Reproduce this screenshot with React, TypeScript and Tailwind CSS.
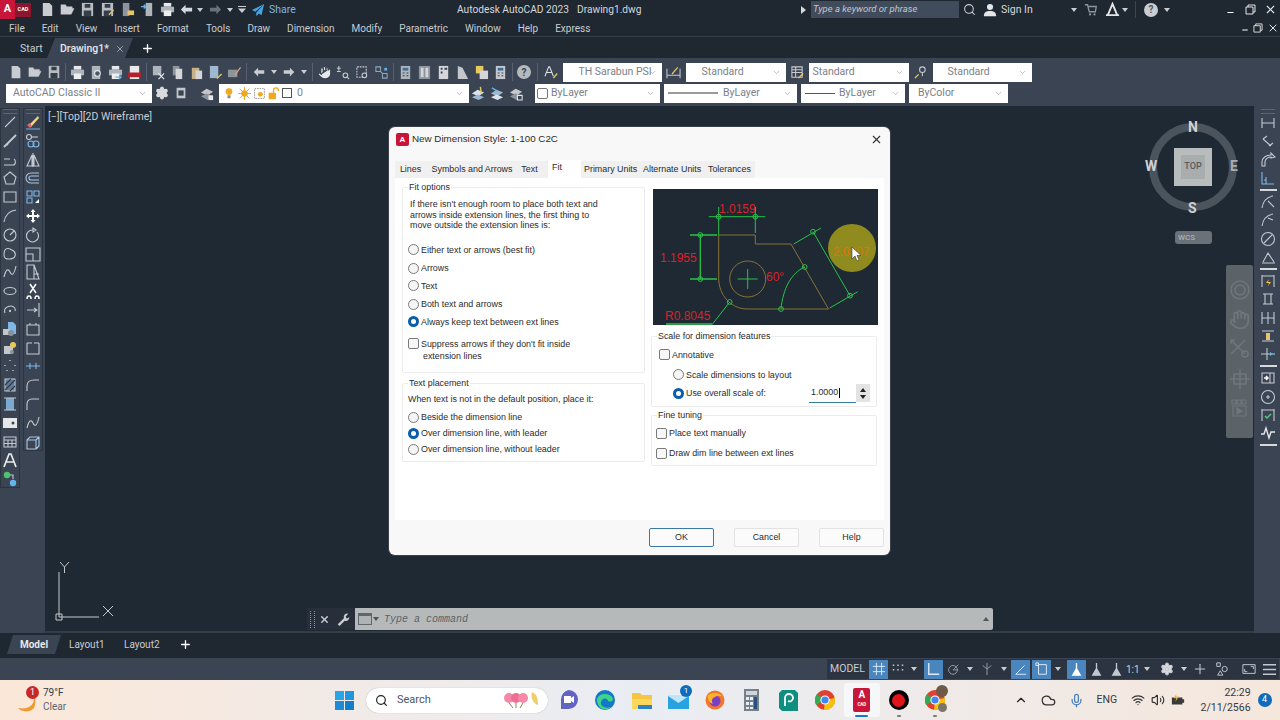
import type { ReactNode } from 'react';
import { ChevronDown, Search, X, Plus, Minus, Settings, ChevronUp, Mic, Cloud, Wifi, Volume2, Hand } from 'lucide-react';

const menus = ['File', 'Edit', 'View', 'Insert', 'Format', 'Tools', 'Draw', 'Dimension', 'Modify', 'Parametric', 'Window', 'Help', 'Express'];

function G({ children, s = 16, className = '', w = 1.1 }: { children: ReactNode; s?: number; className?: string; w?: number }) {
    return (
        <svg width={s} height={s} viewBox="0 0 16 16" fill="none" stroke="currentColor" strokeWidth={w} className={className}>
            {children}
        </svg>
    );
}

const Doc = () => <path d="M3 1h7l3 3v11H3z" fill="#c9ccd1" stroke="none" />;
const Folder = () => <path d="M1 13V3h5l1 2h6v2H4l-3 6h11l3-6H4" fill="#c9ccd1" stroke="#c9ccd1" strokeWidth="0.5" />;
const Disk = () => (
    <>
        <path d="M2 1h12v14H2z" fill="#b9bdc3" stroke="none" />
        <path d="M5 2h6v4H5zM4 9h8v6H4z" fill="#343d4a" stroke="none" />
    </>
);
const Printer = () => (
    <>
        <path d="M4 1h8v4H4z" fill="#e6e8ea" stroke="none" />
        <path d="M1 5h14v6H1z" fill="#aeb4bb" stroke="none" />
        <path d="M4 9h8v6H4z" fill="#eceeef" stroke="none" />
    </>
);
const Undo = () => <path d="M7 3 2 8l5 5V10h7V6H7z" fill="currentColor" stroke="none" />;
const Redo = () => <path d="M9 3l5 5-5 5V10H2V6h7z" fill="currentColor" stroke="none" />;
const Sheet = ({ c = '#c4c8cd' }: { c?: string }) => (
    <>
        <path d="M3 1h10v14H3z" fill={c} stroke="none" />
        <path d="M5 3h6v3H5z" fill="#3f6f9c" stroke="none" />
        <path d="M5 8h2v1H5zM9 8h2v1H9zM5 11h2v1H5zM9 11h2v1H9z" fill="#3a4452" stroke="none" />
    </>
);

function Cell({ children, w = 'w-[19px]' }: { children?: ReactNode; w?: string }) {
    return <div className={`flex shrink-0 items-center justify-center text-[#c9ccd1] ${w}`}>{children}</div>;
}

function Sep({ w = 'w-[5px]' }: { w?: string }) {
    return (
        <div className={`flex shrink-0 justify-center ${w}`}>
            <div className="h-[18px] w-px bg-[#566070]" />
        </div>
    );
}

function Caret() {
    return (
        <svg width="6" height="4" viewBox="0 0 6 4">
            <path d="M0 0h6L3 4z" fill="#c9ccd1" />
        </svg>
    );
}

function Combo({ w, children }: { w: string; children: ReactNode }) {
    return (
        <div className={`flex h-[19px] shrink-0 items-center justify-between bg-white pr-[5px] text-[10.5px] text-[#7c8187] ${w}`}>
            <div className="flex min-w-0 items-center whitespace-nowrap">{children}</div>
            <ChevronDown size={9} className="shrink-0 text-[#a5a8ac]" />
        </div>
    );
}

const leftA: ReactNode[] = [
    <path d="M3 13 13 3" />,
    <path d="M2 14 14 2M5 11l1 1M10 6l1-1" strokeWidth="1.8" />,
    <path d="M2 13h9c3 0 3-5 1-6M2 7h6" />,
    <path d="M8 2l6 5-2 7H4L2 7z" />,
    <path d="M2 3h12v10H2z" />,
    <path d="M2 14C3 8 7 3 14 2" />,
    <>
        <circle cx="8" cy="8" r="6" />
        <path d="M8 8l4-4" />
    </>,
    <path d="M3 4c2-3 5-1 7 0s4 3 3 6-4 3-6 3-5 0-5-4 0-4 1-5z" />,
    <path d="M2 13c2-8 4-9 6-5s4 3 6-6" />,
    <ellipse cx="8" cy="8" rx="6" ry="3.5" />,
    <>
        <path d="M3 11C1 6 6 4 9 4s5 3 4 5" />
        <circle cx="8" cy="9" r="0.6" />
    </>,
    <>
        <path d="M6 1h5l3 3v9H6z" fill="#7db7e8" stroke="none" />
        <path d="M1 8h7v6H1z" fill="#c3c6ca" stroke="none" />
        <circle cx="9" cy="12" r="3" fill="#8a9097" stroke="none" />
    </>,
    <>
        <path d="M2 6h9v8H2z" fill="#c3c6ca" stroke="none" />
        <circle cx="11" cy="5" r="3" fill="#e9c85a" stroke="none" />
        <circle cx="10" cy="12" r="2" fill="#8a9097" stroke="none" />
    </>,
    <path d="M8 2v1M3 7v1M13 7v1M5 12v1M11 12v1" strokeWidth="1.4" strokeDasharray="1 1" />,
    <>
        <path d="M3 2h10v12H3z" fill="#5f7a96" />
        <path d="M3 8l6-6M3 13 13 3M8 14l5-5" stroke="#2f3845" />
    </>,
    <>
        <path d="M4 2h8v12H4z" fill="#79a9cf" stroke="none" />
        <path d="M2 2h12M2 14h12" />
    </>,
    <path d="M1 3h14v10H1z M9.5 8a1.5 1.5 0 1 0 3 0 1.5 1.5 0 1 0-3 0" fill="#e5e7e9" fillRule="evenodd" stroke="none" />,
    <path d="M2 3h12v10H2zM2 6h12M2 9.5h12M6 6v7M10 6v7" />,
    <path d="M2 15 7 2h2l5 13M4.5 10h7" strokeWidth="1.7" stroke="#e8eaec" />,
    <>
        <circle cx="5" cy="4" r="3.2" fill="#4cc46a" stroke="none" />
        <circle cx="11" cy="12" r="3.2" fill="#62b5ea" stroke="none" />
        <path d="M8 4h3v4" />
    </>,
];

const leftB: ReactNode[] = [
    <>
        <path d="M4 11 13 2l1 2-8 9z" fill="#f2d488" stroke="none" />
        <path d="M2 11l3-2 2 3-2 2z" fill="#e66a6a" stroke="none" />
        <path d="M1 15h14" stroke="#6ea7d8" />
    </>,
    <>
        <circle cx="4" cy="4" r="2.5" />
        <path d="M6 4h7" />
        <circle cx="6" cy="11" r="3" stroke="#7db7e8" />
        <circle cx="11" cy="11" r="3" stroke="#7db7e8" />
    </>,
    <path d="M8 1v14M7 3 2 14h5zM9 3l5 11H9z" />,
    <path d="M14 3H6a5 5 0 0 0 0 10h8M14 6H6a2 2 0 0 0 0 4h8" stroke="#a9c6e2" />,
    <>
        <path d="M2 2h5v5H2zM9 2h5v5H9zM2 9h5v5H2z" stroke="#7db7e8" />
        <path d="M10 14l4-4v4z" fill="#fff" stroke="none" />
    </>,
    <path d="M8 1 5.5 4H7v3H4V5.5L1 8l3 2.5V9h3v3H5.5L8 15l2.5-3H9V9h3v1.5L15 8l-3-2.5V7H9V4h1.5z" fill="#fff" stroke="none" />,
    <path d="M12 5a6 6 0 1 1-4-2M8 1v4l3-2z" />,
    <>
        <path d="M1 2h14v13H1z" />
        <path d="M1 8h7v7" />
    </>,
    <path d="M2 1h7v14H2zM9 1l5 14H9M9 10h4l-1-1m1 1-1 1" />,
    <path d="M5 1l6 9M11 1l-6 9M4 13a2 2 0 1 0 .1 0M12 13a2 2 0 1 0 .1 0" stroke="#fff" strokeWidth="1.5" />,
    <path d="M14 1v14M2 8h9m-2-2 3 2-3 2" />,
    <path d="M2 4h12v10H2zM5 4V2M11 4V2" />,
    <path d="M2 3v11h12V3M7 3H2M14 3H9" />,
    <path d="M1 8h14M5 5v6M11 5v6" stroke="#7db7e8" />,
    <path d="M2 14V9c0-4 3-6 7-6h5" />,
    <path d="M2 14V8c0-3 2-5 5-5h7" />,
    <path d="M2 13c2-8 4-9 6-5s4 3 6-6" />,
    <path d="M2 6h9v9H2zM2 6l3-3h9v9l-3 3M11 6l3-3" stroke="#a9c6e2" />,
];

const right: (ReactNode | 'sep')[] = [
    <path d="M2 3v10M14 3v10M2 8h12" />,
    <path d="M3 6l4-3M9 13l4-3M3 6l8 7" />,
    <path d="M2 14V10C2 6 6 3 11 3V1l4 4-4 1V5c-3 0-6 2-6 5v4z" />,
    <path d="M2 2v12h12M6 14V7M4 10h2" stroke="#7db7e8" />,
    'sep',
    <path d="M2 14C3 7 7 3 13 2M8 7l6 6" />,
    <path d="M2 14C3 7 7 3 13 2M8 6l5 2" />,
    <>
        <circle cx="8" cy="8" r="6.5" />
        <path d="M4 12l8-8" />
    </>,
    <path d="M2 14h13M3 13 8 4l6 9" />,
    'sep',
    <>
        <path d="M2 2v12M14 2v12M2 3h12" />
        <path d="M9 6l-3 4h3l-1 3 3-4H8z" fill="#f2c94c" stroke="none" />
    </>,
    <path d="M3 3h10M3 13h10M5 3v10M11 3v10" />,
    <path d="M2 2v12M8 2v12M14 2v12M2 8h12" />,
    <>
        <path d="M2 3h12M2 13h12" />
        <path d="M6 5h4v7H6z" fill="#e6c46c" stroke="none" />
    </>,
    <>
        <path d="M1 8h14M7 2v12" />
        <path d="M10 6l3 2-3 2z" fill="#62b5ea" stroke="none" />
    </>,
    'sep',
    <>
        <path d="M2 3h12v10H2zM10 3v10" />
        <path d="M4 8h3M6 6l2 2-2 2" stroke="#fff" strokeWidth="1.5" />
    </>,
    <>
        <circle cx="8" cy="8" r="6.5" />
        <path d="M6 8h4M8 6v4" />
    </>,
    <>
        <path d="M2 2v12M14 2v12M2 3h12" />
        <path d="M5 9l2 2 4-4" stroke="#55c96e" strokeWidth="1.5" />
    </>,
    <path d="M1 9h3l2-6 3 10 2-6h4" stroke="#e6e8ea" strokeWidth="1.4" />,
    'sep',
];

function Grip() {
    return <div className="mx-auto h-[5px] w-[14px] border-y border-[#677180] opacity-70" />;
}

function TitleBar() {
    return (
        <div className="flex h-[19px] items-center text-[#d5d8dc]">
            <div className="flex h-[19px] w-[15px] items-center justify-center bg-[#c8163a] text-[11px] font-bold text-white">A</div>
            <div className="flex h-[14px] w-[16px] items-center justify-center bg-[#8a1630] text-[5.5px] font-bold text-white">CAD</div>
            <div className="ml-[6px] flex items-center">
                <Cell w="w-[20px]"><G s={15}><Doc /></G></Cell>
                <Cell w="w-[20px]"><G s={15}><Folder /></G></Cell>
                <Cell w="w-[20px]"><G s={15}><Disk /></G></Cell>
                <Cell w="w-[20px]">
                    <G s={15}>
                        <Disk />
                        <path d="M9 13l5-5 1 1-5 5z" fill="#e9c85a" stroke="none" />
                    </G>
                </Cell>
                <Cell w="w-[20px]">
                    <G s={15}>
                        <path d="M3 1h7v14H3z" fill="#8e949b" stroke="none" />
                        <path d="M8 9h7v5H8z" fill="#e6c46c" stroke="none" />
                    </G>
                </Cell>
                <Cell w="w-[20px]">
                    <G s={15}>
                        <path d="M6 1h7v14H6z" fill="#aeb4bb" stroke="none" />
                        <path d="M1 5h5m-2-2 2 2-2 2" stroke="#62b5ea" strokeWidth="1.4" />
                    </G>
                </Cell>
                <Cell w="w-[20px]"><G s={15}><Printer /></G></Cell>
                <Cell w="w-[18px]"><G s={15} className="text-[#d5d8dc]"><Undo /></G></Cell>
                <Cell w="w-[10px]"><Caret /></Cell>
                <Cell w="w-[20px]"><G s={15} className="text-[#69717d]"><Redo /></G></Cell>
                <Cell w="w-[10px]"><Caret /></Cell>
                <Cell w="w-[14px]">
                    <svg width="8" height="7" viewBox="0 0 8 7">
                        <path d="M0 0h8v1H0zM0 2.5h8L4 7z" fill="#c9ccd1" />
                    </svg>
                </Cell>
                <svg width="14" height="14" viewBox="0 0 16 16" className="ml-[2px]">
                    <path d="M15 1 1 8l4 2zM15 1 6 11v4l3-3 3 2z" fill="#4aa3df" />
                </svg>
                <span className="ml-[4px] w-[25px] whitespace-nowrap text-[10.5px] text-[#7fb6e0]">Share</span>
            </div>
            <span className="ml-[163px] w-[109px] whitespace-nowrap text-[10.2px]">Autodesk AutoCAD 2023</span>
            <span className="ml-[11px] whitespace-nowrap text-[10.2px]">Drawing1.dwg</span>
            <div className="ml-auto flex shrink-0 items-center pr-[3px]">
                <svg width="5" height="8" viewBox="0 0 5 8">
                    <path d="M0 0l5 4-5 4z" fill="#d5d8dc" />
                </svg>
                <div className="ml-[5px] flex h-[17px] w-[148px] items-center bg-[#404b5b] pl-[2px] text-[9.5px] italic text-[#c2c7ce]">Type a keyword or phrase</div>
                <Search size={13} className="ml-[3.5px] text-[#c9ccd1]" />
                <svg width="14" height="14" viewBox="0 0 16 16" className="ml-[7.5px]">
                    <circle cx="8" cy="4.5" r="3.5" fill="#e4e6e8" />
                    <path d="M1 15c0-5 3-6 7-6s7 1 7 6z" fill="#e4e6e8" />
                </svg>
                <span className="ml-[4px] w-[31px] whitespace-nowrap text-[10.5px]">Sign In</span>
                <div className="ml-[39px]"><Caret /></div>
                <svg width="14" height="14" viewBox="0 0 16 16" className="ml-[7px]">
                    <path d="M1 2h3l2 8h7l1-6H5" fill="none" stroke="#8e949b" strokeWidth="1.5" />
                    <circle cx="7" cy="13" r="1.3" fill="#8e949b" />
                    <circle cx="12" cy="13" r="1.3" fill="#8e949b" />
                </svg>
                <svg width="15" height="15" viewBox="0 0 16 16" className="ml-[6.5px]">
                    <path d="M8 2 3 14h10zM1 14h14" fill="none" stroke="#e4e6e8" strokeWidth="2" />
                </svg>
                <div className="ml-[2.5px]"><Caret /></div>
                <div className="ml-[7px] h-[17px] w-px bg-[#3c4553]" />
                <div className="ml-[8px] flex h-[14px] w-[14px] items-center justify-center rounded-full bg-[#c9ccd1] text-[10px] font-bold text-[#4c5560]">?</div>
                <div className="ml-[6px]"><Caret /></div>
                <Minus size={9} className="ml-[56px] mt-[6px] text-white" strokeWidth={3} />
                <svg width="11" height="11" viewBox="0 0 11 11" className="ml-[10px]">
                    <path d="M3 3V1h7v7H8M1 3h7v7H1z" fill="none" stroke="#e4e6e8" />
                </svg>
                <X size={13} className="ml-[8px] text-[#e4e6e8]" />
            </div>
        </div>
    );
}

function MenuBar() {
    return (
        <div className="flex h-[18px] items-center justify-between border-b border-[#343c48] pl-[9px] text-[#c9cdd2]">
            <div className="flex gap-[17px] pt-[1px] text-[10px]">
                {menus.map((m) => (
                    <span key={m}>{m}</span>
                ))}
            </div>
            <div className="flex items-center gap-[4px] pr-[1px]">
                <Minus size={8} strokeWidth={3} className="mt-[5px] text-white" />
                <svg width="10" height="10" viewBox="0 0 11 11">
                    <path d="M3 3V1h7v7H8M1 3h7v7H1z" fill="none" stroke="#e4e6e8" />
                </svg>
                <X size={12} className="text-[#e4e6e8]" />
            </div>
        </div>
    );
}

function DocTabs() {
    return (
        <div className="flex h-[21px] items-end pl-[9px] text-[10.5px] text-[#c9cdd2]">
            <span className="mb-[1px] w-[38px] pl-[11px] leading-[16px]">Start</span>
            <div className="flex h-[20px] w-[86px] items-center bg-[#3a4452] pl-[13px] pt-[1px] font-medium text-[#e6e8ea] [clip-path:polygon(8px_0,100%_0,calc(100%-8px)_100%,0_100%)]">
                Drawing1*
                <X size={10} className="ml-[6px] text-[#aeb3b9]" />
            </div>
            <Plus size={13} strokeWidth={2.5} className="mb-[3px] ml-[8px] text-white" />
        </div>
    );
}

function ToolRow1() {
    return (
        <div className="flex h-[20px] items-center pl-[6px] text-[#c9ccd1]">
            <Cell><G s={14}><Doc /></G></Cell>
            <Cell><G s={14}><Folder /></G></Cell>
            <Cell><G s={14}><Disk /></G></Cell>
            <Sep />
            <Cell><G s={15}><Printer /></G></Cell>
            <Cell>
                <G s={15}>
                    <path d="M3 1h9v14H3z" fill="#aeb4bb" stroke="none" />
                    <circle cx="9" cy="9" r="3" fill="#4d5665" stroke="#e6e8ea" />
                </G>
            </Cell>
            <Cell>
                <G s={15}>
                    <Printer />
                    <path d="M8 13h6m-2-2 2 2-2 2" stroke="#62b5ea" strokeWidth="1.3" />
                </G>
            </Cell>
            <Cell>
                <G s={15}>
                    <path d="M3 1h10v14H3z" fill="#e9e9ea" stroke="none" />
                    <path d="M1 8h14v5H1z" fill="#b21f2d" stroke="none" />
                </G>
            </Cell>
            <Sep />
            <Cell>
                <G s={15}>
                    <path d="M2 1h9v10H2z" fill="#aeb4bb" stroke="none" />
                    <path d="M8 9l6 6M14 9l-6 6" stroke="#e6e8ea" strokeWidth="1.3" />
                </G>
            </Cell>
            <Cell>
                <G s={15}>
                    <path d="M3 1h7v10H3z" fill="#8e949b" stroke="none" />
                    <path d="M6 4h7v11H6z" fill="#d4d6d9" stroke="none" />
                </G>
            </Cell>
            <Cell>
                <G s={15}>
                    <path d="M3 3h8v12H3z" fill="#c8b183" stroke="none" />
                    <path d="M7 6h7v9H7z" fill="#d4d6d9" stroke="none" />
                </G>
            </Cell>
            <Cell>
                <G s={15}>
                    <path d="M2 1h9v13H2z" fill="#9fb7cf" stroke="none" />
                    <path d="M9 14l5-5 1 1-5 5z" fill="#e9c85a" stroke="none" />
                </G>
            </Cell>
            <Cell>
                <G s={15}>
                    <path d="M1 5h10v8H1z" fill="#8e949b" stroke="none" />
                    <path d="M8 10l6-8 1 1-6 8z" fill="#e3a774" stroke="none" />
                </G>
            </Cell>
            <Sep w="w-[5.5px]" />
            <Cell><G s={14}><Undo /></G></Cell>
            <Cell w="w-[11px]"><Caret /></Cell>
            <Cell><G s={14}><Redo /></G></Cell>
            <Cell w="w-[11px]"><Caret /></Cell>
            <Sep />
            <Cell><Hand size={15} fill="#e6e8ea" className="text-[#3a4452]" /></Cell>
            <Cell>
                <G s={15}>
                    <path d="M3 1v5M1 3.5h4M1 7h4" />
                    <circle cx="10" cy="11" r="2.5" />
                    <path d="M12 13l2 2" />
                </G>
            </Cell>
            <Cell>
                <G s={15}>
                    <path d="M2 2h10v11H2z" strokeDasharray="2 1" />
                    <circle cx="10" cy="11" r="2.5" fill="#3a4452" />
                </G>
            </Cell>
            <Cell>
                <G s={15}>
                    <path d="M2 2h5v5H2zM9 9h5v5H9zM7 7l2 2" stroke="#8fa8c2" />
                    <path d="M11 3h3v3h-3z" fill="#62b5ea" stroke="none" />
                </G>
            </Cell>
            <Sep />
            <Cell>
                <G s={15}><Sheet c="#aeb4bb" /></G>
            </Cell>
            <Cell>
                <G s={15}>
                    <path d="M2 1h12v14H2z" fill="#8e949b" stroke="none" />
                    <path d="M4 3h3v10H4zM9 3h3v10H9z" fill="#d4d6d9" stroke="none" />
                </G>
            </Cell>
            <Cell>
                <G s={15}>
                    <path d="M3 1h10v14H3z" fill="#d4d6d9" stroke="none" />
                    <path d="M5 3h2v2H5zM5 7h2v2H5zM9 3h3v2H9z" fill="#3a4452" stroke="none" />
                </G>
            </Cell>
            <Cell>
                <G s={15}>
                    <path d="M3 1l5 2 6 12H3z" fill="#c4c8cd" stroke="none" />
                </G>
            </Cell>
            <Cell>
                <G s={15}>
                    <path d="M2 1h8v8H2z" fill="#e9c85a" stroke="none" />
                    <path d="M6 6h9v9H6z" fill="#d4d6d9" stroke="none" />
                </G>
            </Cell>
            <Cell><G s={15}><Sheet /></G></Cell>
            <Sep />
            <Cell>
                <div className="flex h-[14px] w-[14px] items-center justify-center rounded-full bg-[#b5b9be] text-[10px] font-bold text-[#3a4452]">?</div>
            </Cell>
            <Sep w="w-[8px]" />
            <Cell>
                <G s={15}>
                    <path d="M1 12 5 2h1l4 10M3 8h5" stroke="#dfe1e4" />
                    <path d="M10 14l4-5" stroke="#e9c85a" strokeWidth="1.5" />
                </G>
            </Cell>
            <div className="w-[2px]" />
            <Combo w="w-[99px]"><span className="pl-[16px]">TH Sarabun PSI</span></Combo>
            <Cell w="w-[24px]">
                <G s={15}>
                    <path d="M1 4v10M15 4v10M1 11h14" />
                    <path d="M6 9l6-7 1 1-6 7z" fill="#e9c85a" stroke="none" />
                </G>
            </Cell>
            <Combo w="w-[100px]"><span className="pl-[16px]">Standard</span></Combo>
            <Cell w="w-[23px]">
                <G s={15}>
                    <path d="M2 2h11v11H2zM2 5h11M2 8h11M6 2v11" />
                    <path d="M9 14l5-5" stroke="#e9c85a" strokeWidth="1.5" />
                </G>
            </Cell>
            <Combo w="w-[100px]"><span className="pl-[4px]">Standard</span></Combo>
            <Cell w="w-[24px]">
                <G s={15}>
                    <path d="M2 14l4-4" stroke="#e9c85a" strokeWidth="1.5" />
                    <circle cx="10" cy="5" r="3" />
                    <path d="M10 8v4" />
                </G>
            </Cell>
            <Combo w="w-[99px]"><span className="pl-[15px]">Standard</span></Combo>
        </div>
    );
}

function ToolRow2() {
    return (
        <div className="mt-[1px] flex h-[20px] items-center pl-[6px]">
            <Combo w="w-[146px]"><span className="pl-[7px]">AutoCAD Classic II</span></Combo>
            <Cell><Settings size={14} fill="#d9dbde" className="text-[#d9dbde]" /></Cell>
            <Cell>
                <G s={14}>
                    <path d="M3 2h10v12H3z" fill="#c4c8cd" stroke="none" />
                    <path d="M5 5h6v6H5z" fill="#39424f" stroke="none" />
                </G>
            </Cell>
            <div className="w-[8px] shrink-0" />
            <Cell>
                <G s={15}>
                    <path d="M1 7l6-4 7 3-6 4z" fill="#c4c8cd" stroke="none" />
                    <path d="M1 11l6-3 7 3-6 4z" fill="#8e949b" stroke="none" />
                    <path d="M9 10h5v5H9z" fill="#e6e8ea" stroke="none" />
                </G>
            </Cell>
            <div className="w-[2px] shrink-0" />
            <div className="flex h-[19px] w-[250px] shrink-0 items-center justify-between bg-white pr-[5px]">
                <div className="flex items-center gap-[1px] pl-[4px] text-[10.5px] text-[#7c8187]">
                    <G s={12}>
                        <circle cx="8" cy="6" r="4.5" fill="#f0a81f" stroke="none" />
                        <path d="M6 11h4v4H6z" fill="#8a8a80" stroke="none" />
                    </G>
                    <div className="w-[1px]" />
                    <svg width="13" height="13" viewBox="0 0 16 16">
                        <circle cx="8" cy="8" r="4" fill="#f0a81f" />
                        <path d="M8 0v16M0 8h16M2 2l12 12M14 2 2 14" stroke="#f0a81f" strokeWidth="1.2" />
                    </svg>
                    <svg width="13" height="13" viewBox="0 0 16 16" className="ml-[1px]">
                        <path d="M2 2h12v12H2z" fill="none" stroke="#888" strokeDasharray="2 1" />
                        <circle cx="9" cy="9" r="3" fill="#f0a81f" />
                    </svg>
                    <svg width="13" height="13" viewBox="0 0 16 16">
                        <path d="M2 7h9v8H2z" fill="#f0a81f" />
                        <path d="M8 7V4a3 3 0 0 1 6 0v1" fill="none" stroke="#f0a81f" strokeWidth="1.6" />
                    </svg>
                    <div className="ml-[1px] h-[10px] w-[10px] border border-[#555]" />
                    <span className="ml-[4px]">0</span>
                </div>
                <ChevronDown size={9} className="text-[#a5a8ac]" />
            </div>
            <Cell>
                <G s={15}>
                    <path d="M1 8l6-4 7 3-6 4z" fill="#dbe2ea" stroke="none" />
                    <path d="M1 12l6-3 7 3-6 3z" fill="#9fb7cf" stroke="none" />
                    <path d="M10 1l1 7" stroke="#e9c85a" strokeWidth="1.5" />
                </G>
            </Cell>
            <Cell>
                <G s={15}>
                    <path d="M1 8l6-4 7 3-6 4z" fill="#9fb7cf" stroke="none" />
                    <path d="M1 12l6-3 7 3-6 3z" fill="#dbe2ea" stroke="none" />
                    <path d="M2 2l5 3" stroke="#62b5ea" strokeWidth="1.5" />
                </G>
            </Cell>
            <Cell>
                <G s={15}>
                    <path d="M1 7l6-4 7 3-6 4z" fill="#c4c8cd" stroke="none" />
                    <path d="M1 11l6-3 7 3-6 4z" fill="#8e949b" stroke="none" />
                    <path d="M9 10h5v5H9z" fill="#39424f" stroke="#e6e8ea" />
                </G>
            </Cell>
            <div className="w-[9px] shrink-0" />
            <Combo w="w-[125px]">
                <div className="ml-[2px] h-[11px] w-[11px] rounded-[2px] border border-[#777]" />
                <span className="ml-[3px]">ByLayer</span>
            </Combo>
            <div className="w-[4px] shrink-0" />
            <Combo w="w-[133px]">
                <div className="ml-[4px] h-[2px] w-[50px] bg-[#9a9a9a]" />
                <span className="ml-[5px]">ByLayer</span>
            </Combo>
            <div className="w-[4px] shrink-0" />
            <Combo w="w-[104px]">
                <div className="ml-[4px] h-px w-[30px] bg-[#555]" />
                <span className="ml-[4px]">ByLayer</span>
            </Combo>
            <div className="w-[4px] shrink-0" />
            <Combo w="w-[99px]"><span className="pl-[9px]">ByColor</span></Combo>
        </div>
    );
}

function LeftRail() {
    const col = (items: ReactNode[], key: string) => (
        <div key={key} className="flex w-[20px] flex-col items-center border border-[#2c3440] text-[#c3c9d1]">
            <Grip />
            <div className="flex flex-col gap-[2.8px]">
                {items.map((it, i) => (
                    <G key={i} s={16}>{it}</G>
                ))}
            </div>
        </div>
    );
    return (
        <div className="flex w-[45px] shrink-0 items-start gap-[3px] bg-[#3a4452] pt-[2px]">
            {col(leftA, 'a')}
            {col(leftB, 'b')}
        </div>
    );
}

function RightRail() {
    return (
        <div className="flex w-[26px] shrink-0 flex-col items-center bg-[#3a4452] pl-[2px] pt-[3px] text-[#c3c9d1]">
            <Grip />
            <div className="mt-[1px] flex flex-col items-center gap-[2.3px]">
                {right.map((it, i) =>
                    it === 'sep' ? (
                        <div key={i} className="my-[1px] h-[1.5px] w-[17px] bg-[#d5d8dc]" />
                    ) : (
                        <G key={i} s={16}>{it}</G>
                    ),
                )}
            </div>
        </div>
    );
}

function Compass() {
    return (
        <div className="absolute left-[1101px] top-[14px] flex h-[94px] w-[94px] items-center justify-center">
            <div className="absolute inset-[3px] rounded-full border-[8px] border-[#4b535c]" />
            <div className="relative flex h-[38px] w-[38px] items-center justify-center bg-[#b9bcbc]">
                <div className="flex h-[24px] w-[24px] items-center justify-center bg-[#a9adae] text-[9px] font-medium text-[#555b60]">TOP</div>
            </div>
            <span className="absolute left-[42px] top-[-3px] text-[14px] font-bold text-[#cfd2d4]">N</span>
            <span className="absolute left-[42px] top-[78px] text-[14px] font-bold text-[#cfd2d4]">S</span>
            <span className="absolute left-[84px] top-[36px] text-[14px] font-bold text-[#a9adb0]">E</span>
            <span className="absolute left-[-1px] top-[36px] text-[14px] font-bold text-[#cfd2d4]">W</span>
        </div>
    );
}

function WcsPill() {
    return <div className="absolute left-[1130px] top-[125px] flex h-[13px] w-[37px] items-center rounded-[3px] bg-[#6a7179] pl-[3px] text-[8px] font-medium text-[#a9aeb3]">WCS</div>;
}

function NavBar() {
    return (
        <div className="absolute left-[1181px] top-[159px] flex h-[173px] w-[27px] flex-col items-center gap-[8px] rounded-[2px] bg-[#5b6268] pt-[14px] text-[#70777c]">
            <svg width="22" height="22" viewBox="0 0 22 22" fill="none" stroke="currentColor" strokeWidth="1.5">
                <circle cx="11" cy="11" r="9" />
                <circle cx="11" cy="11" r="5" />
            </svg>
            <Hand size={21} />
            <svg width="22" height="22" viewBox="0 0 22 22" fill="none" stroke="currentColor" strokeWidth="1.5">
                <path d="M2 2l14 14M2 16 16 2M2 2h4M2 2v4" />
                <circle cx="16" cy="16" r="3" />
            </svg>
            <svg width="22" height="22" viewBox="0 0 22 22" fill="none" stroke="currentColor" strokeWidth="1.5">
                <path d="M11 1v20M1 11h20M5 6h12v10H5z" />
            </svg>
            <svg width="20" height="22" viewBox="0 0 20 22" fill="none" stroke="currentColor" strokeWidth="1.2">
                <path d="M2 2h4v4H2zM7 2h4v4H7zM12 2h4v4h-4zM3 8h13v10H3z" />
                <path d="M7 10l5 3-5 3z" fill="currentColor" />
            </svg>
        </div>
    );
}

function Ucs() {
    return (
        <svg width="70" height="70" viewBox="0 0 70 70" className="absolute bottom-[3px] left-[8px]" fill="none" stroke="#c4c8cc" strokeWidth="1">
            <path d="M6 59V14M6 59h40M3 56h6v6H3z" />
            <path d="M7 4l4.5 5L16 4M11.5 9v6" />
            <path d="M50 48l10 10M60 48 50 58" />
        </svg>
    );
}

function CommandLine() {
    return (
        <div className="absolute bottom-[1px] left-[262px] flex h-[22px] w-[686px] overflow-hidden rounded-r-[2px]">
            <div className="flex w-[48px] items-center bg-[#272f3a] text-[#c9ccd1]">
                <div className="ml-[3px] h-[17px] w-[5px] border-x border-dotted border-[#8d939a]" />
                <X size={11} strokeWidth={3} className="ml-[4px]" />
                <svg width="14" height="14" viewBox="0 0 16 16" className="ml-[6px]">
                    <path d="M2 14l7-7a4 4 0 0 1 5-5l-3 3 1 2 2 0 1-2a4 4 0 0 1-5 5l-6 6z" fill="#c9ccd1" />
                </svg>
            </div>
            <div className="flex flex-1 items-center bg-[#b6b9ba] pl-[3px]">
                <svg width="14" height="12" viewBox="0 0 14 12">
                    <path d="M0 0h14v12H0z" fill="#60676f" />
                    <path d="M1 3h12v8H1z" fill="#aeb3b6" />
                </svg>
                <svg width="6" height="4" viewBox="0 0 6 4" className="ml-[1px]">
                    <path d="M0 0h6L3 4z" fill="#4c5258" />
                </svg>
                <span className="ml-[5px] font-['Liberation_Mono'] text-[10px] italic text-[#5d6368]">Type a command</span>
                <svg width="6" height="4" viewBox="0 0 6 4" className="ml-auto mr-[4px]">
                    <path d="M3 0l3 4H0z" fill="#555" />
                </svg>
            </div>
        </div>
    );
}

function Radio({ on }: { on?: boolean }) {
    return on ? (
        <span className="flex h-[11px] w-[11px] shrink-0 items-center justify-center rounded-full bg-[#0b5cad]">
            <span className="h-[5px] w-[5px] rounded-full bg-white" />
        </span>
    ) : (
        <span className="h-[11px] w-[11px] shrink-0 rounded-full border border-[#7a7a7a] bg-[#f5f5f5]" />
    );
}

function Check() {
    return <span className="h-[11px] w-[11px] shrink-0 rounded-[2px] border border-[#7a7a7a] bg-[#f7f7f7]" />;
}

function Opt({ on, kind = 'r', children, className = '' }: { on?: boolean; kind?: 'r' | 'c'; children: ReactNode; className?: string }) {
    return (
        <div className={`flex items-center gap-[2px] whitespace-nowrap leading-[12px] ${className}`}>
            {kind === 'r' ? <Radio on={on} /> : <Check />}
            <span>{children}</span>
        </div>
    );
}

function Group({ title, className, children, pad }: { title: string; className: string; children: ReactNode; pad: string }) {
    return (
        <fieldset className={`rounded-[2px] border border-[#ececec] ${className}`}>
            <legend className="ml-[5px] bg-white px-px leading-[10px]">{title}</legend>
            <div className={pad}>{children}</div>
        </fieldset>
    );
}

function Preview() {
    const dot = (x: number, y: number) => <circle key={`${x}-${y}`} cx={x} cy={y} r="2.4" />;
    return (
        <svg width="225" height="136" viewBox="0 0 225 136" className="block bg-[#1f2933]">
            <path d="M65.7 46h36.6v9H138l37.5 65H94C78 120 66 106 65.7 90z" fill="none" stroke="#8a7238" strokeWidth="1" />
            <circle cx="94.7" cy="90" r="18" fill="none" stroke="#8a7238" />
            <g fill="none" stroke="#28c24a" strokeWidth="1">
                <path d="M84.7 90h20M94.7 80v20" />
                <path d="M65.7 18v28M102.3 18v26M55.7 27.7h56.6" />
                <path d="M47.3 46v44M37 46h27M37 90h27" strokeWidth="1.3" />
                <path d="M128 120c2-20 10-36 23.7-42M76.7 113 59 135.7" />
                <path d="M160 42.7 197 106.7M140.7 55 168 39M176.7 119l28-16.3" />
                {dot(65.7, 27.7)}
                {dot(102.3, 27.7)}
                {dot(47.3, 46)}
                {dot(47.3, 90)}
                {dot(128, 120)}
                {dot(151.7, 78)}
                {dot(76.7, 113)}
                {dot(160, 42.7)}
                {dot(197, 106.7)}
            </g>
            <path d="M13 135h46" stroke="#28c24a" strokeWidth="1.5" />
            <circle cx="199" cy="59" r="24" fill="#8f8b1e" />
            <g fontFamily="'Liberation Sans', sans-serif" fontSize="12" fill="#d8232a">
                <text x="66" y="24">1.0159</text>
                <text x="7" y="73">1.1955</text>
                <text x="113" y="92">60°</text>
                <text x="12" y="131">R0.8045</text>
                <text x="180" y="67" fill="#d9780f">2.0207</text>
            </g>
            <path d="M199 58v12l3-3 2 5 2-1-2-4.5h4z" fill="#fff" stroke="#222" strokeWidth="0.5" />
        </svg>
    );
}

function Btn({ children, primary }: { children: ReactNode; primary?: boolean }) {
    return (
        <div className={`flex h-[19px] w-[65px] items-center justify-center rounded-[2px] border bg-[#fbfbfb] ${primary ? 'border-[#3b78a8]' : 'border-[#e2e2e2]'}`}>
            {children}
        </div>
    );
}

function Dialog() {
    const tabs: [string, string][] = [
        ['Lines', 'w-[31px]'],
        ['Symbols and Arrows', 'w-[92px]'],
        ['Text', 'w-[23px]'],
    ];
    return (
        <div className="absolute left-[389px] top-[127px] flex h-[428px] w-[501px] flex-col rounded-[6px] bg-[#f8f8f8] font-['Liberation_Sans'] text-[8.9px] text-[#2b2b2b] shadow-[0_0_0_1px_#3b4148]">
            <div className="flex h-[25px] shrink-0 items-center pl-[7px] pr-[7px] text-[9.8px]">
                <div className="flex h-[13px] w-[13px] items-center justify-center rounded-[2px] bg-[#c8163a] text-[8px] font-bold text-white">A</div>
                <span className="ml-[3px]">New Dimension Style: 1-100 C2C</span>
                <X size={13} className="ml-auto text-[#333]" />
            </div>
            <div className="flex h-[26px] shrink-0 items-end whitespace-nowrap pl-[6px]">
                {tabs.map(([t, w]) => (
                    <div key={t} className={`flex h-[17px] items-center justify-center bg-[#f0f0f0] ${w}`}>{t}</div>
                ))}
                <div className="flex h-[17px] w-[7px] bg-[#f0f0f0]" />
                <div className="flex h-[18px] w-[33px] items-start bg-white pl-[4px] pt-[1px]">Fit</div>
                <div className="flex h-[17px] w-[59px] items-center bg-[#f0f0f0] pl-[3px]">Primary Units</div>
                <div className="flex h-[17px] w-[65px] items-center bg-[#f0f0f0] pl-[3px]">Alternate Units</div>
                <div className="flex h-[17px] w-[50px] items-center bg-[#f0f0f0] pl-[3px]">Tolerances</div>
            </div>
            <div className="mx-[6px] flex h-[342px] gap-[6px] bg-white pl-[7px] pt-[4px]">
                <div className="flex w-[243px] flex-col gap-[5px]">
                    <Group title="Fit options" className="h-[191px]" pad="pl-[5px]">
                        <p className="mt-[7px] pl-[2px] leading-[10.5px]">
                            If there isn't enough room to place both text and
                            <br />
                            arrows inside extension lines, the first thing to
                            <br />
                            move outside the extension lines is:
                        </p>
                        <Opt className="mt-[13px]">Either text or arrows (best fit)</Opt>
                        <Opt className="mt-[6.5px]">Arrows</Opt>
                        <Opt className="mt-[5.5px]">Text</Opt>
                        <Opt className="mt-[6.5px]">Both text and arrows</Opt>
                        <Opt on className="mt-[5.5px]">Always keep text between ext lines</Opt>
                        <Opt kind="c" className="mt-[10px]">Suppress arrows if they don't fit inside</Opt>
                        <p className="mt-[1px] pl-[15px] leading-[11px]">extension lines</p>
                    </Group>
                    <Group title="Text placement" className="h-[84px]" pad="pl-[5px]">
                        <p className="mt-[6px] leading-[11px]">When text is not in the default position, place it:</p>
                        <Opt className="mt-[6px]">Beside the dimension line</Opt>
                        <Opt on className="mt-[4px]">Over dimension line, with leader</Opt>
                        <Opt className="mt-[4px]">Over dimension line, without leader</Opt>
                    </Group>
                </div>
                <div className="flex w-[226px] flex-col pl-[2px] pt-[7px]">
                    <Preview />
                    <Group title="Scale for dimension features" className="-ml-[2px] mt-[6px] h-[76px] w-[226px]" pad="pl-[7px]">
                        <Opt kind="c" className="mt-[7.5px]">Annotative</Opt>
                        <div className="mt-[8px] pl-[14px]">
                            <Opt>Scale dimensions to layout</Opt>
                            <div className="mt-[3px] flex h-[19px] items-center">
                                <Opt on className="w-[136px]">Use overall scale of:</Opt>
                                <div className="flex h-[19px] w-[47px] items-center border-b-[1.5px] border-[#3a7ea0] pl-[2px]">
                                    1.0000
                                    <span className="ml-px h-[10px] w-px bg-black" />
                                </div>
                                <div className="flex h-[18px] w-[14px] flex-col items-center justify-center gap-[3px] bg-[#e3e3e3]">
                                    <svg width="6" height="4" viewBox="0 0 6 4"><path d="M3 0l3 4H0z" fill="#222" /></svg>
                                    <svg width="6" height="4" viewBox="0 0 6 4"><path d="M0 0h6L3 4z" fill="#222" /></svg>
                                </div>
                            </div>
                        </div>
                    </Group>
                    <Group title="Fine tuning" className="-ml-[2px] mt-[3px] h-[56px] w-[226px]" pad="pl-[4px]">
                        <Opt kind="c" className="mt-[7px]">Place text manually</Opt>
                        <Opt kind="c" className="mt-[8px]">Draw dim line between ext lines</Opt>
                    </Group>
                </div>
            </div>
            <div className="flex flex-1 items-center justify-end gap-[20px] pr-[6px]">
                <Btn primary>OK</Btn>
                <Btn>Cancel</Btn>
                <Btn>Help</Btn>
            </div>
        </div>
    );
}

function StatusBtn({ children, on, w = 'w-[19px]' }: { children: ReactNode; on?: boolean; w?: string }) {
    return <div className={`flex h-[19px] shrink-0 items-center justify-center ${w} ${on ? 'bg-[#4a86bd] text-[#dbe9f5]' : 'text-[#c3c8ce]'}`}>{children}</div>;
}

const AnnoA = () => (
    <G s={15} w={1.4}>
        <path d="M8 1v6M4 14l4-7 4 7z" fill="currentColor" />
    </G>
);

function StatusBar() {
    return (
        <div className="flex h-[22px] items-center justify-end bg-[#3a4452] pr-[1px] text-[#c9ccd1]">
            <div className="flex h-[20px] items-center bg-[#2b3440] pl-[3px] text-[10.5px]">
                <span className="w-[39px] whitespace-nowrap">MODEL</span>
                <StatusBtn on>
                    <G s={14}><path d="M5 1v14M11 1v14M1 5h14M1 11h14" /></G>
                </StatusBtn>
                <StatusBtn>
                    <G s={12} w={2}><path d="M2 2v12M8 2v12M14 2v12" strokeDasharray="2 4" /></G>
                </StatusBtn>
                <StatusBtn w="w-[14px]"><Caret /></StatusBtn>
                <div className="w-[3px]" />
                <StatusBtn on>
                    <G s={14}><path d="M2 1v13h12" strokeWidth="1.6" /></G>
                </StatusBtn>
                <StatusBtn>
                    <G s={14} className="opacity-70">
                        <circle cx="8" cy="9" r="5" />
                        <path d="M8 9l6-6M8 9h6" />
                    </G>
                </StatusBtn>
                <StatusBtn w="w-[16px]"><Caret /></StatusBtn>
                <StatusBtn w="w-[18px]">
                    <G s={14} className="opacity-70"><path d="M8 1v14M3 4l5 4 5-4" /></G>
                </StatusBtn>
                <StatusBtn w="w-[15px]"><Caret /></StatusBtn>
                <StatusBtn on>
                    <G s={14}><path d="M2 14h12M2 14 12 4" /></G>
                </StatusBtn>
                <div className="w-[2px]" />
                <StatusBtn on>
                    <G s={14}><path d="M4 3h9v11H4zM1 1h3v3H1z" /></G>
                </StatusBtn>
                <StatusBtn w="w-[14px]"><Caret /></StatusBtn>
                <div className="w-[2px]" />
                <StatusBtn on><span className="text-white"><AnnoA /></span></StatusBtn>
                <StatusBtn w="w-[20px]"><AnnoA /></StatusBtn>
                <StatusBtn w="w-[20px]"><AnnoA /></StatusBtn>
                <span className="w-[14px] whitespace-nowrap text-[10px]">1:1</span>
                <StatusBtn w="w-[14px]"><Caret /></StatusBtn>
                <div className="w-[3px]" />
                <StatusBtn w="w-[20px]"><Settings size={14} fill="#d9dbde" /></StatusBtn>
                <StatusBtn w="w-[13px]"><Caret /></StatusBtn>
                <StatusBtn w="w-[20px]"><Plus size={16} strokeWidth={1.6} /></StatusBtn>
                <div className="w-[1px]" />
                <StatusBtn w="w-[22px]">
                    <G s={14}>
                        <path d="M2 1h4v4H2z" />
                        <circle cx="11" cy="8" r="3" />
                        <path d="M3 15l3-5 3 5z" />
                    </G>
                </StatusBtn>
                <div className="w-[6px]" />
                <StatusBtn w="w-[20px]">
                    <G s={14}><path d="M1 3h14v10H1zM10 5h3v3M6 11H3V8" /></G>
                </StatusBtn>
                <StatusBtn w="w-[20px]">
                    <G s={15} w={1.6}><path d="M1 3h14M1 8h14M1 13h14" /></G>
                </StatusBtn>
            </div>
        </div>
    );
}

function LayoutTabs() {
    return (
        <div className="flex h-[25px] items-start bg-[#1f2731] pl-[7px] pt-[2px] text-[10px] text-[#c9cdd2]">
            <div className="flex h-[19px] w-[54px] items-center justify-center bg-[#3a4452] font-bold text-[#e6e8ea] [clip-path:polygon(6px_0,100%_0,calc(100%-6px)_100%,0_100%)]">Model</div>
            <span className="ml-[8px] flex h-[19px] w-[35px] items-center whitespace-nowrap">Layout1</span>
            <span className="ml-[20px] flex h-[19px] w-[35px] items-center whitespace-nowrap">Layout2</span>
            <div className="ml-[20px] flex h-[19px] items-center">
                <Plus size={13} strokeWidth={2.5} className="text-white" />
            </div>
        </div>
    );
}

function AppIcon({ children, active, dot }: { children: ReactNode; active?: boolean; dot?: boolean }) {
    return (
        <div className={`relative flex h-[34px] w-[36.7px] shrink-0 items-center justify-center rounded-[3px] ${active ? 'bg-[#f6f7f9]' : ''}`}>
            {children}
            {active && <div className="absolute bottom-0 h-[2.5px] w-[13px] rounded-full bg-[#1b78c2]" />}
            {dot && <div className="absolute bottom-0 h-[2.5px] w-[4px] rounded-full bg-[#7b7b7b]" />}
        </div>
    );
}

const ChromeIcon = () => (
    <svg width="20" height="20" viewBox="0 0 20 20">
        <circle cx="10" cy="10" r="10" fill="#e0402f" />
        <path d="M10 10 1.3 15A10 10 0 0 1 2 4z" fill="#34a853" />
        <path d="M10 10 19.8 8A10 10 0 0 1 9 20z" fill="#f4c20d" />
        <circle cx="10" cy="10" r="4.6" fill="#fff" />
        <circle cx="10" cy="10" r="3.6" fill="#4285f4" />
    </svg>
);

function Taskbar() {
    return (
        <div className="flex h-[40px] items-center bg-gradient-to-r from-[#fbe7d8] via-[#e9edf3] to-[#f6e7dc] text-[#333b44]">
            <div className="relative ml-[17px] h-[30px] w-[26px] shrink-0">
                <svg width="20" height="20" viewBox="0 0 20 20" className="absolute left-0 top-[9px]">
                    <path d="M17 1c1 9-4 15-16 13 3 4 15 6 17-3 1-5 0-8-1-10z" fill="#ef9a2e" />
                </svg>
                <div className="absolute left-[9px] top-[1px] flex h-[13px] w-[13px] items-center justify-center rounded-full bg-[#c62828] text-[9px] text-white">1</div>
            </div>
            <div className="w-[292px] shrink-0 text-[10px] leading-[14px]">
                <div>79°F</div>
                <div className="text-[#5e666e]">Clear</div>
            </div>
            <svg width="19" height="19" viewBox="0 0 19 19" className="shrink-0">
                <path d="M0 0h9v9H0z" fill="#2aa4e8" />
                <path d="M10 0h9v9h-9z" fill="#1f96de" />
                <path d="M0 10h9v9H0z" fill="#1d8bd6" />
                <path d="M10 10h9v9h-9z" fill="#137fcb" />
            </svg>
            <div className="ml-[12px] flex h-[25px] w-[182px] shrink-0 items-center rounded-full bg-white pl-[9px] shadow-[0_0_1px_#999]">
                <Search size={13} className="text-[#222]" strokeWidth={2.2} />
                <span className="ml-[9px] pt-[1px] text-[11px] text-[#4f5760]">Search</span>
                <svg width="38" height="22" viewBox="0 0 38 22" className="ml-auto mr-[7px]">
                    <circle cx="6" cy="9" r="5" fill="#f58aa8" />
                    <circle cx="13" cy="9" r="5" fill="#ee6f93" />
                    <circle cx="20" cy="9" r="5" fill="#f58aa8" />
                    <path d="M6 14l4 5M13 14v5M20 14l-3 5" stroke="#7a8a5a" />
                    <path d="M29 3c5 2 6 7 6 13-4-1-8-7-6-13z" fill="#ebcf6a" />
                </svg>
            </div>
            <div className="ml-[2px] flex items-center">
                <AppIcon>
                    <svg width="19" height="20" viewBox="0 0 19 20">
                        <path d="M9.5 0a9.5 9.5 0 0 1 0 19H2V9.5A9.5 9.5 0 0 1 9.5 0z" fill="#6264c4" />
                        <path d="M5 6h7v7H5zM12 8l3-2v7l-3-2z" fill="#fff" />
                    </svg>
                </AppIcon>
                <AppIcon>
                    <svg width="20" height="20" viewBox="0 0 20 20">
                        <circle cx="10" cy="10" r="10" fill="#1477c8" />
                        <path d="M2 11a8 6 0 0 1 16-2c0 3-4 3-5 2 0-3-6-4-7 1-1 4 4 7 10 5-5 5-13 2-14-6z" fill="#3fd38b" />
                    </svg>
                </AppIcon>
                <AppIcon>
                    <svg width="20" height="18" viewBox="0 0 20 18">
                        <path d="M0 2h8l2 2h10v14H0z" fill="#f5c543" />
                        <path d="M0 8h20v10H0z" fill="#fbd75b" />
                        <path d="M6 14h14v4H6z" fill="#2f80c7" />
                    </svg>
                </AppIcon>
                <AppIcon>
                    <div className="relative">
                        <svg width="21" height="18" viewBox="0 0 21 18">
                            <path d="M0 5h21v13H0z" fill="#29a2e0" />
                            <path d="M0 5l10.5 7L21 5V4H0z" fill="#bfe6fa" />
                        </svg>
                        <div className="absolute -right-[3px] -top-[6px] flex h-[12px] w-[12px] items-center justify-center rounded-full bg-[#0f6cbd] text-[8px] text-white">1</div>
                    </div>
                </AppIcon>
                <AppIcon>
                    <svg width="20" height="20" viewBox="0 0 20 20">
                        <circle cx="10" cy="10" r="9.5" fill="#f4762b" />
                        <circle cx="10" cy="11" r="5.5" fill="#7b3fc4" />
                        <path d="M3 5c5-3 12-3 15 2-4-2-6-1-8 0-3 1-4 4-2 7-3-1-6-4-5-9z" fill="#fcb32c" />
                    </svg>
                </AppIcon>
                <AppIcon>
                    <svg width="15" height="22" viewBox="0 0 15 22">
                        <path d="M0 0h15v22H0z" fill="#75808a" />
                        <path d="M2 2h11v4H2z" fill="#cfd6dc" />
                        <path d="M2 8h3v3H2zM6 8h3v3H6zM2 13h3v3H2zM6 13h3v3H6zM2 18h3v2H2zM6 18h3v2H6z" fill="#e9edf0" />
                        <path d="M10 8h3v12h-3z" fill="#2b4f7c" />
                    </svg>
                </AppIcon>
                <AppIcon>
                    <svg width="19" height="21" viewBox="0 0 19 21">
                        <path d="M3 0h13l3 3v18H3L0 18V3z" fill="#0f8f7f" />
                        <path d="M6 16V8a4 4 0 0 1 8 0c0 3-3 4-5 3" fill="none" stroke="#fff" strokeWidth="1.8" />
                    </svg>
                </AppIcon>
                <AppIcon><ChromeIcon /></AppIcon>
                <AppIcon active>
                    <div className="flex h-[24px] w-[17px] flex-col items-center rounded-[2px] bg-[#c8163a] text-[10px] font-bold leading-[14px] text-white">
                        A
                        <span className="text-[4.5px] leading-[6px]">CAD</span>
                    </div>
                </AppIcon>
                <AppIcon dot>
                    <div className="flex h-[20px] w-[20px] items-center justify-center rounded-full bg-black">
                        <div className="h-[13px] w-[13px] rounded-full bg-[#e0151b]" />
                    </div>
                </AppIcon>
                <AppIcon dot>
                    <div className="relative">
                        <ChromeIcon />
                        <div className="absolute -right-[3px] -top-[5px] h-[12px] w-[12px] rounded-full bg-[#6e5a48]" />
                        <div className="absolute -bottom-[2px] -right-[2px] h-[9px] w-[9px] rounded-full bg-[#7c7468]" />
                    </div>
                </AppIcon>
            </div>
            <ChevronUp size={14} className="ml-[60px] shrink-0 text-[#222]" strokeWidth={2} />
            <Cloud size={15} className="ml-[13px] shrink-0 text-[#333]" />
            <Mic size={15} className="ml-[13px] shrink-0 text-[#4a7fb8]" />
            <span className="ml-[13px] w-[20px] text-[10.5px]">ENG</span>
            <Wifi size={14} className="ml-[14px] shrink-0 text-[#333]" />
            <Volume2 size={14} className="ml-[6px] shrink-0 text-[#333]" />
            <svg width="14" height="14" viewBox="0 0 16 16" className="ml-[6px] shrink-0">
                <path d="M1 5h12v8H1zM13 7h2v4h-2z" fill="#3a3a3a" />
                <path d="M6 1l-3 5h3l-1 4 4-6H6z" fill="#e6b63c" />
            </svg>
            <div className="ml-[13px] w-[53px] text-right text-[10.5px] leading-[15px]">
                <div>22:29</div>
                <div>2/11/2566</div>
            </div>
            <div className="ml-[7px] flex h-[14px] w-[14px] items-center justify-center rounded-full bg-[#0f6cbd] text-[9px] text-white">4</div>
        </div>
    );
}

export default function App() {
    return (
        <div className="relative flex h-[720px] w-[1280px] flex-col overflow-hidden bg-[#1f2731] font-['Roboto',sans-serif]">
            <TitleBar />
            <MenuBar />
            <DocTabs />
            <div className="h-[48px] shrink-0 bg-[#3a4452] pt-[4px]">
                <ToolRow1 />
                <ToolRow2 />
            </div>
            <div className="flex h-[527px] shrink-0">
                <LeftRail />
                <div className="relative flex-1 border-b-[2px] border-[#343c48] bg-[#1f2933]">
                    <span className="absolute left-[3px] top-[3px] text-[10.5px] text-[#c9ced3]">[−][Top][2D Wireframe]</span>
                    <Compass />
                    <WcsPill />
                    <NavBar />
                    <Ucs />
                    <CommandLine />
                </div>
                <RightRail />
            </div>
            <LayoutTabs />
            <StatusBar />
            <Taskbar />
            <Dialog />
        </div>
    );
}
